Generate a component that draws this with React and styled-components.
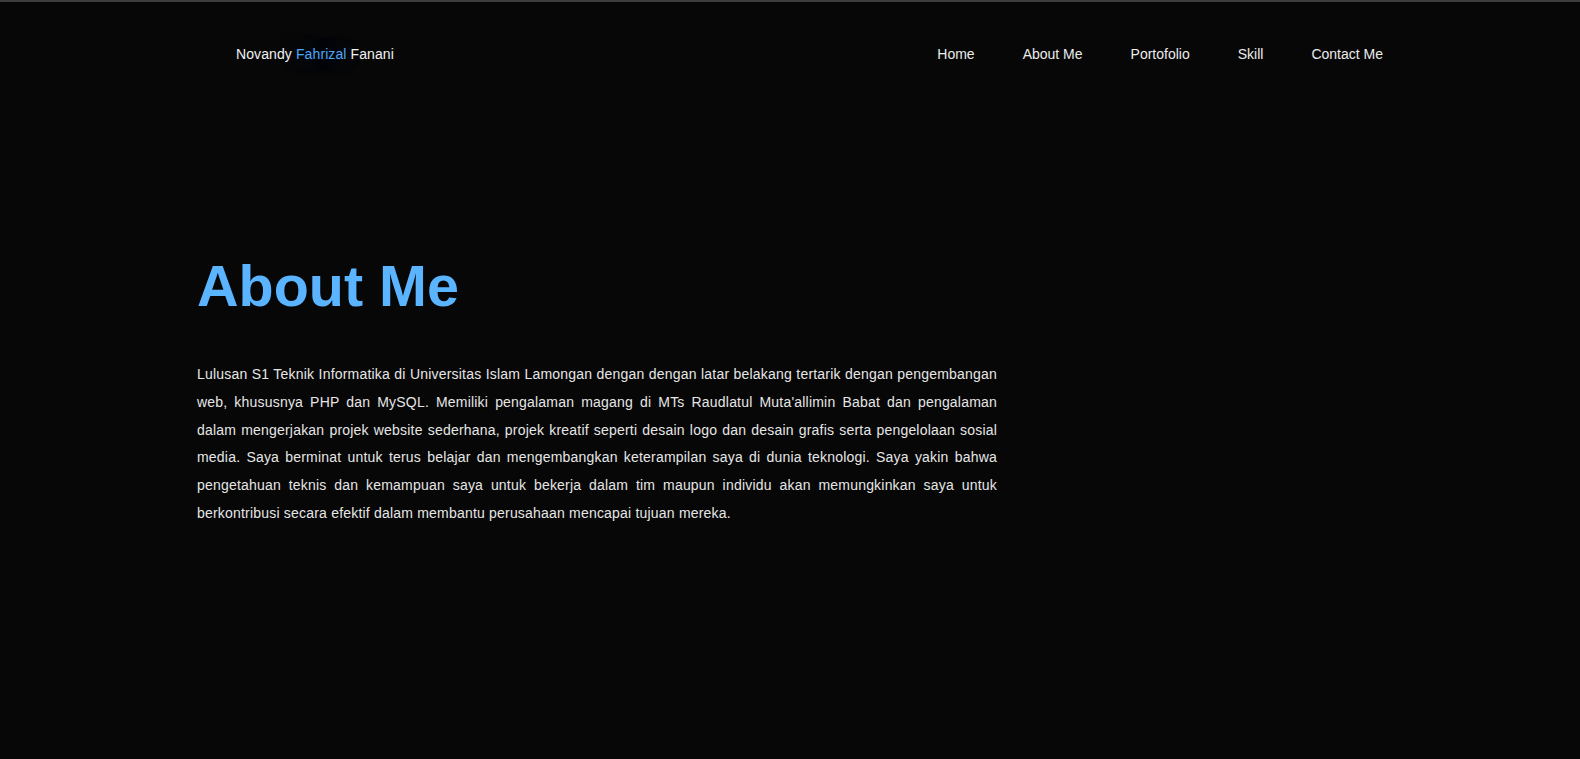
import React from 'react'
import styled, { createGlobalStyle } from "styled-components";

const GlobalStyle = createGlobalStyle`
  html, body {
    margin: 0;
    padding: 0;
    background-color: #070707;
    font-family: "Liberation Sans", Arial, sans-serif;
  }
`;

const menus = ["Home", "About Me", "Portofolio", "Skill", "Contact Me"];

const App = () => {
  return (
    <Page>
      <GlobalStyle />
      <Header>
        <Logo>
          Novandy <Blue>Fahrizal</Blue> Fanani
        </Logo>
        <Nav>
          {menus.map((m) => (
            <NavItem key={m} href="#">{m}</NavItem>
          ))}
        </Nav>
      </Header>
      <About>
        <Title>About Me</Title>
        <Desc>
          Lulusan S1 Teknik Informatika di Universitas Islam Lamongan dengan dengan latar belakang tertarik dengan pengembangan web, khususnya PHP dan MySQL. Memiliki pengalaman magang di MTs Raudlatul Muta'allimin Babat dan pengalaman dalam mengerjakan projek website sederhana, projek kreatif seperti desain logo dan desain grafis serta pengelolaan sosial media. Saya berminat untuk terus belajar dan mengembangkan keterampilan saya di dunia teknologi. Saya yakin bahwa pengetahuan teknis dan kemampuan saya untuk bekerja dalam tim maupun individu akan memungkinkan saya untuk berkontribusi secara efektif dalam membantu perusahaan mencapai tujuan mereka.
        </Desc>
      </About>
    </Page>
  )
}

const Page = styled.div`
  min-height: 759px;
  box-sizing: border-box;
  border-top: 2px solid #3d3d3d;
  background-color: #070707;
  color: #ececec;
`;

const Header = styled.header`
  display: flex;
  justify-content: space-between;
  align-items: center;
  height: 104px;
  padding: 0 197px 0 236px;
`;

const Logo = styled.div`
  font-size: 14px;
  letter-spacing: 0.1px;
  color: #f2f2f2;
`;

const Blue = styled.span`
  color: #4fa8f5;
  text-shadow: 0 0 22px rgba(60, 150, 255, 0.35), 0 0 40px rgba(60, 150, 255, 0.2);
`;

const Nav = styled.nav`
  display: flex;
  gap: 48px;
`;

const NavItem = styled.a`
  font-size: 14px;
  color: #ececec;
  text-decoration: none;
  cursor: pointer;
  &:hover {
    color: #5ab4ff;
  }
`;

const About = styled.section`
  padding: 147px 0 0 197px;
  width: 800px;
`;

const Title = styled.h1`
  margin: 0 0 42px;
  font-size: 57.5px;
  font-weight: bold;
  color: #5ab4ff;
  line-height: 1.15;
`;

const Desc = styled.p`
  margin: 0;
  font-size: 14px;
  letter-spacing: 0.2px;
  line-height: 27.7px;
  text-align: justify;
  color: #e6e6e6;
`;

export default App;
